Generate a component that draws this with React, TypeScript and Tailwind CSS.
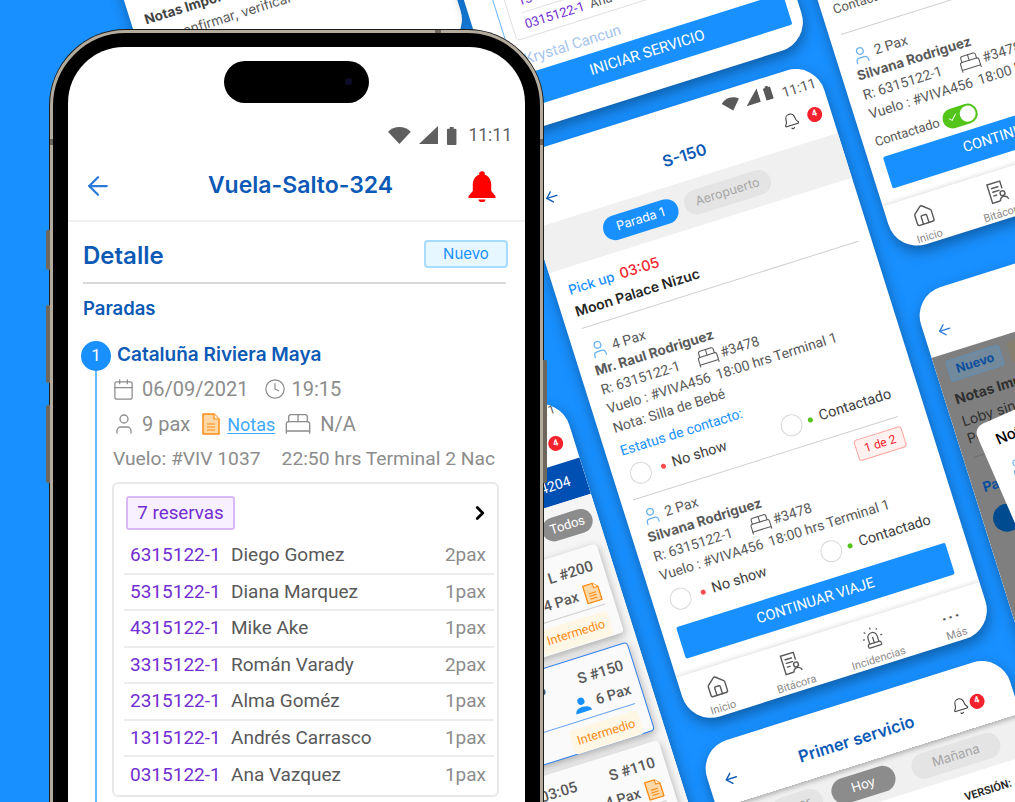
import { ArrowLeft, BedDouble, Bell, Calendar, Check, ChevronRight, Clock, House, Siren, User } from "lucide-react";
import type { ReactNode } from "react";

const RESERVAS = [
  ["6315122-1", "Diego Gomez", "2pax"],
  ["5315122-1", "Diana Marquez", "1pax"],
  ["4315122-1", "Mike Ake", "1pax"],
  ["3315122-1", "Román Varady", "2pax"],
  ["2315122-1", "Alma Goméz", "1pax"],
  ["1315122-1", "Andrés Carrasco", "1pax"],
  ["0315122-1", "Ana Vazquez", "1pax"],
];

function StatusIcons({ className }: { className: string }) {
  return (
    <>
      <svg viewBox="0 0 24 20" className={`${className} w-auto`} fill="currentColor">
        <path d="M12 19L0 6c3-3 7.500-5 12-5s9 2 12 5z" />
      </svg>
      <svg viewBox="0 0 20 20" className={`${className} w-auto`} fill="currentColor">
        <path d="M20 19V0L0 19z" />
      </svg>
      <svg viewBox="0 0 12 20" className={`${className} w-auto`} fill="currentColor">
        <path d="M2 3h2V1h4v2h2a1 1 0 0 1 1 1v15a1 1 0 0 1-1 1H2a1 1 0 0 1-1-1V4a1 1 0 0 1 1-1z" />
      </svg>
    </>
  );
}

function NoteIcon({ className }: { className: string }) {
  return (
    <svg viewBox="0 0 18 22" className={className}>
      <path d="M1 1h11l5 5v15H1z" fill="#ffd8a8" stroke="#fa8c16" strokeWidth="1.500" strokeLinejoin="round" />
      <path d="M12 1v5h5" fill="#fff2e0" stroke="#fa8c16" strokeWidth="1.200" />
      <path d="M5 11h8M5 14h8M5 17h8" stroke="#fa8c16" strokeWidth="1.200" />
    </svg>
  );
}

function BitacoraIcon() {
  return (
    <svg viewBox="0 0 24 24" className="h-[23px] w-[23px]" fill="none" stroke="#595959" strokeWidth="1.500">
      <path d="M18 10V2H4v20h8" />
      <path d="M7 7h8M7 11h8M7 15h4" />
      <circle cx="17" cy="15" r="2.500" />
      <path d="M12.500 22.500c.4-2.500 2.300-4 4.500-4s4.100 1.500 4.500 4" />
    </svg>
  );
}

function Tilted({ className, children }: { className: string; children?: ReactNode }) {
  return (
    <div className={`absolute w-[318px] origin-top-left rotate-[-17.5deg] overflow-hidden rounded-[30px] bg-white shadow-[0_6px_14px_rgba(0,0,0,0.35)] ${className}`}>
      {children}
    </div>
  );
}

function Badge4() {
  return (
    <span className="flex h-[15px] w-[15px] items-center justify-center rounded-full bg-[#f5222d] text-[9px] font-bold text-white">4</span>
  );
}

function Passenger({ pax, name, nota }: { pax: string; name: string; nota?: string }) {
  return (
    <div className="pl-[15px] text-[14px] text-[#595959]">
      <div className="flex h-[20px] items-center">
        <User className="h-[20px] w-[20px] text-[#69b1f0]" strokeWidth={1.500} />
        <span className="ml-[4px]">{pax}</span>
      </div>
      <div className="flex h-[20px] items-center font-[family-name:Inter,sans-serif] text-[13.5px] font-bold">{name}</div>
      <div className="flex h-[20px] items-center">
        <span className="w-[100px]">R: 6315122-1</span>
        <BedDouble className="h-[23px] w-[23px]" strokeWidth={1.100} />
        <span className="ml-[2px]">#3478</span>
      </div>
      <div className="flex h-[20px] items-center whitespace-nowrap">
        <span className="w-[106px]">Vuelo : #VIVA456</span>
        <span className="ml-[8px] w-[60px]">18:00 hrs</span>
        <span className="ml-[1px]">Terminal 1</span>
      </div>
      {nota && <div className="flex h-[20px] items-center">{nota}</div>}
    </div>
  );
}

function ContactRadios() {
  return (
    <div className="flex h-[30px] items-center pl-[17px] text-[14.5px] text-[#404040]">
      <div className="flex w-[158px] items-center">
        <span className="h-[22px] w-[22px] rounded-full border border-[#d9d9d9]" />
        <span className="ml-[10px] h-[5px] w-[5px] rounded-full bg-[#ff4d4f]" />
        <span className="ml-[7px]">No show</span>
      </div>
      <span className="h-[22px] w-[22px] rounded-full border border-[#d9d9d9]" />
      <span className="ml-[6px] h-[5px] w-[5px] rounded-full bg-[#52c41a]" />
      <span className="ml-[7px]">Contactado</span>
    </div>
  );
}

function BottomNav() {
  return (
    <div className="grid h-[51px] grid-cols-[72px_82px_90px_74px] border-t border-[#e8e8e8] pt-[9px] text-[11px] text-[#8c8c8c] shadow-[0_-2px_3px_rgba(0,0,0,0.06)]">
      <div className="flex flex-col items-center">
        <House className="h-[23px] w-[23px] text-[#595959]" strokeWidth={1.500} />
        <span className="mt-[3px]">Inicio</span>
      </div>
      <div className="flex flex-col items-center">
        <BitacoraIcon />
        <span className="mt-[3px]">Bitácora</span>
      </div>
      <div className="flex flex-col items-center">
        <Siren className="h-[23px] w-[23px] text-[#595959]" strokeWidth={1.300} />
        <span className="mt-[3px]">Incidencias</span>
      </div>
      <div className="flex flex-col items-center">
        <span className="flex h-[23px] items-center text-[16px] font-bold leading-none tracking-[2px] text-[#595959]">...</span>
        <span className="mt-[3px]">Más</span>
      </div>
    </div>
  );
}

function ServiceCard({ code, time, pax, note, active }: { code: string; time?: string; pax: string; note?: boolean; active?: boolean }) {
  return (
    <div className={`mb-[10px] ml-[18px] h-[93px] w-[290px] rounded-[4px] bg-[#fafafa] pr-[10px] pt-[9px] text-[#595959] shadow-[0_3px_8px_rgba(0,0,0,0.3)] ${active ? "border border-[#2f80ed]" : ""}`}>
      <div className="flex h-[22px] items-center justify-end gap-[34px] text-[15px] font-medium">
        {time && <span>{time}</span>}
        <span>{code}</span>
      </div>
      <div className="mt-[3px] flex h-[24px] items-center justify-end gap-[6px] text-[14.5px] font-medium">
        {active ? (
          <svg viewBox="0 0 20 20" className="h-[18px] w-[18px]" fill="#1890ff">
            <circle cx="10" cy="5.500" r="4" />
            <path d="M1 18c0-4 4-6 9-6s9 2 9 6z" />
          </svg>
        ) : (
          <span className="mr-[10px] h-[6px] w-[6px] rounded-full bg-[#1890ff]" />
        )}
        <span>{pax}</span>
        {note && <NoteIcon className="h-[20px] w-[17px]" />}
      </div>
      <div className={`mt-[2px] ml-[60px] h-px ${active ? "bg-[#69a5f0]" : "bg-[#d0d0d0]"}`} />
      <div className="mt-[6px] flex justify-end">
        <span className="rounded-[4px] bg-[#fff7e6] px-[6px] py-[3px] text-[12.5px] text-[#fa8c16]">Intermedio</span>
      </div>
    </div>
  );
}

function ServiceBack() {
  return (
    <Tilted className="left-[257px] top-[492px] h-[596px]">
      <div className="flex h-[64px] flex-col items-end pr-[9px] pt-[1px] text-[12px] text-[#595959]">
        <span>11:11</span>
        <span className="mr-[2px] mt-[17px]"><Badge4 /></span>
      </div>
      <div className="flex h-[38px] items-center justify-end bg-[#0050b3] pr-[16px] text-[14px] text-white">4204</div>
      <div className="h-full bg-[#f5f5f5]">
        <div className="flex h-[49px] items-center justify-end pb-[3px] pr-[6px]">
          <span className="flex h-[24px] w-[52px] items-center justify-center rounded-full bg-[#8c8c8c] text-[13px] text-white">Todos</span>
        </div>
        <ServiceCard code="L #200" time="03:05" pax="4 Pax" note />
        <ServiceCard code="S #150" time="03:05" pax="6 Pax" active />
        <ServiceCard code="S #110" time="03:05" pax="4 Pax" note />
      </div>
    </Tilted>
  );
}

function ServiceDetail() {
  return (
    <Tilted className="left-[512px] top-[157px] h-[596px] font-[family-name:Roboto,sans-serif]">
      <div className="flex h-[38px] items-center justify-end gap-[5px] pr-[6px] pt-[3px] text-[14px] text-[#595959]">
        <StatusIcons className="h-[15px] -translate-y-[5px]" />
        <span className="ml-[4px]">11:11</span>
      </div>
      <div className="grid h-[37px] grid-cols-[68px_194px_56px] items-center pb-[18px]">
        <ArrowLeft className="ml-[17px] h-[18px] w-[18px] text-[#0c5ab5]" strokeWidth={1.800} />
        <span className="text-center font-[family-name:Inter,sans-serif] text-[16px] font-semibold text-[#0c5ab5]">S-150</span>
        <div className="flex items-center">
          <Bell className="ml-[6px] h-[18px] w-[18px] text-[#404040]" strokeWidth={1.500} />
          <span className="ml-[8px]"><Badge4 /></span>
        </div>
      </div>
      <div className="flex h-[47px] items-center gap-[7px] bg-[#f0f0f0] pl-[65px] font-[family-name:Inter,sans-serif] text-[12.5px]">
        <span className="flex h-[25px] w-[78px] items-center justify-center rounded-full bg-[#1890ff] text-white">Parada 1</span>
        <span className="flex h-[25px] w-[90px] items-center justify-center rounded-full bg-[#e4e4e4] text-[#a6a6a6]">Aeropuerto</span>
      </div>
      <div className="mt-[12px] flex h-[20px] items-center gap-[6px] pl-[14px] font-[family-name:Inter,sans-serif] text-[13.5px] font-medium text-[#1890ff]">
        Pick up <span className="text-[14.5px] text-[#f5222d]">03:05</span>
      </div>
      <div className="flex h-[24px] items-center pl-[14px] font-[family-name:Inter,sans-serif] text-[14px] font-semibold text-[#262626]">Moon Palace Nizuc</div>
      <div className="ml-[15px] mt-[6px] h-px w-[290px] bg-[#d0d0d0]" />
      <div className="pt-[14px]">
        <Passenger pax="4 Pax" name="Mr. Raul Rodriguez" nota="Nota: Silla de Bebé" />
      </div>
      <div className="mt-[4px] flex h-[20px] items-center pl-[15px] text-[14px] text-[#1890ff]">Estatus de contacto:</div>
      <div className="mt-[2px]"><ContactRadios /></div>
      <div className="ml-[12px] mt-[8px] h-px w-[278px] bg-[#d0d0d0]" />
      <div className="relative pt-[10px]">
        <span className="absolute right-[28px] top-[9px] flex h-[22px] w-[50px] items-center justify-center rounded-[3px] border border-[#ffa39e] bg-[#fff1f0] text-[12px] text-[#f5222d]">1 de 2</span>
        <Passenger pax="2 Pax" name="Silvana Rodriguez" />
      </div>
      <div className="mt-[3px]"><ContactRadios /></div>
      <div className="ml-[15px] mt-[11px] flex h-[33px] w-[282px] items-center justify-center rounded-[2px] bg-[#1890ff] text-[14.5px] text-white">CONTINUAR VIAJE</div>
      <div className="mt-[14px]"><BottomNav /></div>
    </Tilted>
  );
}

function TopRightCard() {
  return (
    <Tilted className="left-[717px] top-[-319px] h-[600px] font-[family-name:Roboto,sans-serif]">
      <div className="pl-[12px] pt-[339px] text-[13px] text-[#595959]">Contactado</div>
      <div className="ml-[12px] mt-[15px] h-px w-[290px] bg-[#d0d0d0]" />
      <div className="pt-[15px]"><Passenger pax="2 Pax" name="Silvana Rodriguez" /></div>
      <div className="mt-[8px] flex h-[20px] items-center pl-[12px] text-[13px] text-[#595959]">
        <span className="w-[71px]">Contactado</span>
        <span className="flex h-[20px] w-[36px] items-center justify-between rounded-full bg-[#52c41a] px-[2px]">
          <Check className="ml-[3px] h-[11px] w-[11px] text-white" strokeWidth={2} />
          <span className="h-[16px] w-[16px] rounded-full bg-white" />
        </span>
      </div>
      <div className="ml-[15px] mt-[6px] flex h-[33px] w-[282px] items-center justify-center rounded-[2px] bg-[#1890ff] text-[14.5px] text-white">CONTINUAR VIAJE</div>
      <div className="mt-[13px]"><BottomNav /></div>
    </Tilted>
  );
}

function TopMiddleCard() {
  return (
    <Tilted className="left-[328px] top-[-431px] flex h-[596px] flex-col justify-end pb-[22px] font-[family-name:Roboto,sans-serif]">
      <div className="ml-[27px] border-l border-[#69b8ff] pb-[32px] pl-[10px]">
        <div className="w-[262px] rounded-[4px] border border-[#e0e0e0] px-[12px] text-[13px]">
          <div className="flex h-[24px] items-center gap-[6px] border-b border-[#e0e0e0]"><span className="text-[#722ed1]">1315122-1</span><span className="text-[#595959]">Andrés Carrasco</span></div>
          <div className="flex h-[24px] items-center gap-[6px]"><span className="text-[#722ed1]">0315122-1</span><span className="text-[#595959]">Ana Vazquez</span></div>
        </div>
      </div>
      <div className="-mt-[22px] mb-[4px] h-[20px] pl-[40px] text-[15px] leading-[20px] text-[#a6c5ec]">Krystal Cancun</div>
      <div className="ml-[12px] flex h-[33px] w-[294px] items-center justify-center rounded-[2px] bg-[#1890ff] text-[15px] text-white">INICIAR SERVICIO</div>
    </Tilted>
  );
}

function NotesCard() {
  return (
    <Tilted className="left-[912px] top-[296px] h-[596px] font-[family-name:Inter,sans-serif]">
      <div className="flex h-[65px] items-end pb-[14px] pl-[12px]">
        <ArrowLeft className="h-[18px] w-[18px] text-[#2a7ad6]" strokeWidth={1.800} />
      </div>
      <div className="h-full bg-[#7f7f7f] pl-[10px] pt-[7px] text-[#303030]">
        <div className="flex gap-[8px]">
          <span className="ml-[2px] flex h-[22px] w-[56px] items-center justify-center rounded-[3px] border border-[#5f8fb8] bg-[#738a9c] text-[12.5px] font-bold text-[#0d4f9e]">Nuevo</span>
          <span className="h-[22px] w-[60px] rounded-[3px] bg-[#857f70]" />
        </div>
        <div className="mt-[9px] text-[14px] font-bold leading-[18px]">Notas Importantes</div>
        <div className="mt-[5px] text-[14px] leading-[18px]">Loby sin confirmar</div>
        <div className="text-[14px] leading-[18px]">Por</div>
        <div className="mt-[10px] h-px w-[280px] bg-[#707070]" />
        <div className="mt-[20px] text-[14px] font-bold text-[#0d4f9e]">Paradas</div>
        <div className="mt-[12px] h-[28px] w-[28px] rounded-full bg-[#004b8f]" />
      </div>
      <div className="absolute left-[19px] top-[144px] h-[300px] w-[290px] origin-top-left rotate-[-6deg] rounded-[10px] bg-white pl-[16px] pt-[10px]">
        <div className="text-[15px] font-medium text-black">Notas</div>
        <User className="mt-[11px] h-[18px] w-[18px] text-[#69b1f0]" strokeWidth={1.500} />
        <div className="mt-[12px] pl-[6px] text-[14px] text-[#595959]">R: 63</div>
      </div>
    </Tilted>
  );
}

function PrimerServicio() {
  return (
    <Tilted className="left-[698px] top-[749px] h-[300px] font-[family-name:Roboto,sans-serif]">
      <div className="relative z-10 grid h-[63px] grid-cols-[64px_180px_74px] items-center pt-[13px] shadow-[0_2px_5px_rgba(0,0,0,0.3)]">
        <ArrowLeft className="ml-[14px] h-[18px] w-[18px] text-[#0c5ab5]" strokeWidth={1.800} />
        <span className="text-center font-[family-name:Inter,sans-serif] text-[16.5px] font-semibold text-[#0c5ab5]">Primer servicio</span>
        <div className="flex items-center">
          <Bell className="ml-[10px] h-[18px] w-[18px] text-[#404040]" strokeWidth={1.500} />
          <span className="ml-[1px]"><Badge4 /></span>
        </div>
      </div>
      <div className="flex h-[42px] items-center gap-[10px] bg-[#f0f0f0] pl-[52px] font-[family-name:Inter,sans-serif] text-[13px]">
        <span className="flex h-[26px] w-[52px] items-center justify-center rounded-full bg-[#e4e4e4] text-[#a6a6a6]">Ayer</span>
        <span className="flex h-[26px] w-[66px] items-center justify-center rounded-full bg-[#8c8c8c] text-white">Hoy</span>
        <span className="ml-[8px] flex h-[26px] w-[92px] items-center justify-center rounded-full bg-[#e4e4e4] text-[#a6a6a6]">Mañana</span>
      </div>
      <div className="mt-[14px] pl-[240px] text-[11px] font-semibold text-[#262626]">VERSIÓN:</div>
    </Tilted>
  );
}

function BehindCard() {
  return (
    <Tilted className="left-[34px] top-[-285px] h-[440px] font-[family-name:Inter,sans-serif]">
      <div className="pl-[14px] pt-[315px] text-[13.5px] font-bold leading-[18px] text-[#434343]">Notas Importantes</div>
      <div className="mt-[4px] pl-[14px] text-[13.5px] leading-[18px] text-[#595959]">Por confirmar, verificar</div>
    </Tilted>
  );
}

function Phone() {
  return (
    <div className="absolute left-[50px] top-[30px] h-[900px] w-[493px] rounded-[76px] border-[3px] border-[#b3ab9c] bg-black px-[15px] pt-[14px] shadow-[0_0_0_1px_#1c1c1c]">
      <span className="absolute left-[-7px] top-[197px] h-[40px] w-[4px] rounded-l-[2px] bg-[#6d675e]" />
      <span className="absolute left-[-7px] top-[272px] h-[78px] w-[4px] rounded-l-[2px] bg-[#6d675e]" />
      <span className="absolute left-[-7px] top-[372px] h-[78px] w-[4px] rounded-l-[2px] bg-[#6d675e]" />
      <span className="absolute right-[-7px] top-[327px] h-[123px] w-[4px] rounded-r-[2px] bg-[#6d675e]" />
      <span className="absolute left-[382px] top-[-3px] h-[3px] w-[6px] bg-[#6d675e]" />
      <span className="absolute left-[-3px] top-[106px] h-[6px] w-[3px] bg-[#6d675e]" />
      <span className="absolute right-[-3px] top-[106px] h-[6px] w-[3px] bg-[#6d675e]" />

      <div className="relative h-[880px] w-[457px] overflow-hidden rounded-[56px] bg-white font-[family-name:Roboto,sans-serif]">
        <div className="absolute left-[156px] top-[14px] h-[42px] w-[145px] rounded-full bg-black">
          <span className="absolute right-[17px] top-[17px] h-[7px] w-[7px] rounded-full bg-[#0c0c2a]" />
        </div>

        <div className="flex h-[101px] items-end justify-end pb-[2px] pr-[13px] text-[#5f5f5f]">
          <div className="flex items-center">
            <StatusIcons className="mr-[8px] h-[19px]" />
            <span className="ml-[3px] text-[17.500px] leading-[22px]">11:11</span>
          </div>
        </div>

        <div className="grid h-[74px] grid-cols-[84px_1fr_76px] items-center border-b-2 border-[#f0f0f0] pt-[3px]">
          <ArrowLeft className="ml-[15px] h-[30px] w-[30px] text-[#2a7ad6]" strokeWidth={1.800} />
          <h1 className="text-center font-[family-name:Inter,sans-serif] text-[23px] font-semibold text-[#0c5ab5]">Vuela-Salto-324</h1>
          <svg viewBox="0 0 24 24" className="ml-[16px] h-[34px] w-[34px]" fill="#ff0000">
            <path d="M12 1.500a2 2 0 0 0-2 2v.6C7 5 5.500 8 5.500 11v4.500L2.500 19v1.500h19V19l-3-3.500V11c0-3-1.500-6-4.500-6.900v-.6a2 2 0 0 0-2-2zM9.500 21.500a2.500 1.800 0 0 0 5 0z" />
          </svg>
        </div>

        <div className="flex items-center justify-between pl-[15px] pr-[17px] pt-[18px]">
          <span className="translate-y-[2px] font-[family-name:Inter,sans-serif] text-[24px] font-semibold leading-[28px] text-[#0c5ab5]">Detalle</span>
          <span className="flex h-[28px] w-[84px] items-center justify-center rounded-[4px] border-2 border-[#a8dcff] bg-[#e6f7ff] font-[family-name:Inter,sans-serif] text-[15px] text-[#1890ff]">Nuevo</span>
        </div>
        <div className="ml-[15px] mt-[14px] h-[2px] w-[423px] bg-[#d9d9d9]" />
        <div className="ml-[15px] mt-[14px] h-[20px] font-[family-name:Inter,sans-serif] text-[18.500px] font-semibold leading-[20px] text-[#0c5ab5]">Paradas</div>

        <div className="ml-[13px] mt-[23px] flex">
          <div className="flex w-[30px] flex-col items-center">
            <span className="flex h-[30px] w-[30px] shrink-0 items-center justify-center rounded-full bg-[#1890ff] text-[17px] text-white">1</span>
            <span className="h-[500px] w-[2px] bg-[#69b8ff]" />
          </div>
          <div className="ml-[1px] w-[387px]">
            <div className="h-[28px] pl-[5px] font-[family-name:Inter,sans-serif] text-[19px] font-semibold leading-[28px] text-[#0c5ab5]">Cataluña Riviera Maya</div>
            <div className="mt-[6px] flex h-[28px] items-center text-[20px] text-[#8c8c8c]">
              <Calendar className="h-[23px] w-[23px]" strokeWidth={1.300} />
              <span className="ml-[7px]">06/09/2021</span>
              <Clock className="ml-[16px] h-[22px] w-[22px]" strokeWidth={1.300} />
              <span className="ml-[5px]">19:15</span>
            </div>
            <div className="mt-[7px] flex h-[28px] items-center text-[20px] text-[#8c8c8c]">
              <User className="h-[24px] w-[24px]" strokeWidth={1.300} />
              <span className="ml-[6px]">9 pax</span>
              <NoteIcon className="ml-[12px] h-[22px] w-[18px]" />
              <span className="ml-[7px] text-[18px] text-[#40a9ff] underline underline-offset-2">Notas</span>
              <BedDouble className="ml-[9px] h-[28px] w-[28px]" strokeWidth={1.100} />
              <span className="ml-[8px]">N/A</span>
            </div>
            <div className="mt-[8px] flex h-[26px] items-center whitespace-nowrap pl-[1px] text-[19.250px] text-[#8c8c8c]">
              <span>Vuelo: #VIV 1037</span>
              <span className="ml-[21px]">22:50 hrs Terminal 2 Nac</span>
            </div>

            <div className="mt-[10px] rounded-[6px] border-2 border-[#e8e8e8] pb-[1px] pt-[12px]">
              <div className="flex items-center justify-between pl-[12px] pr-[6px]">
                <span className="flex h-[34px] w-[109px] items-center justify-center rounded-[3px] border-2 border-[#d9b8f7] bg-[#f9f0ff] text-[18.800px] text-[#722ed1]">7 reservas</span>
                <ChevronRight className="h-[22px] w-[22px] text-black" strokeWidth={3} />
              </div>
              <div className="ml-[10px] mr-[3px] mt-[8px]">
                {RESERVAS.map(([code, name, pax], i) => (
                  <div key={code} className={`flex h-[36.5px] items-center pl-[6px] pr-[8px] text-[19px] ${i < RESERVAS.length - 1 ? "border-b-2 border-[#ececec]" : ""}`}>
                    <span className="w-[101px] text-[#722ed1]">{code}</span>
                    <span className="text-[#595959]">{name}</span>
                    <span className="ml-auto text-[#8c8c8c]">{pax}</span>
                  </div>
                ))}
              </div>
            </div>
          </div>
        </div>
      </div>
    </div>
  );
}

export default function App() {
  return (
    <div className="relative h-[802px] w-[1015px] overflow-hidden bg-[#1890ff] font-[family-name:Roboto,sans-serif]">
      <BehindCard />
      <TopMiddleCard />
      <TopRightCard />
      <NotesCard />
      <ServiceBack />
      <PrimerServicio />
      <ServiceDetail />
      <Phone />
    </div>
  );
}
